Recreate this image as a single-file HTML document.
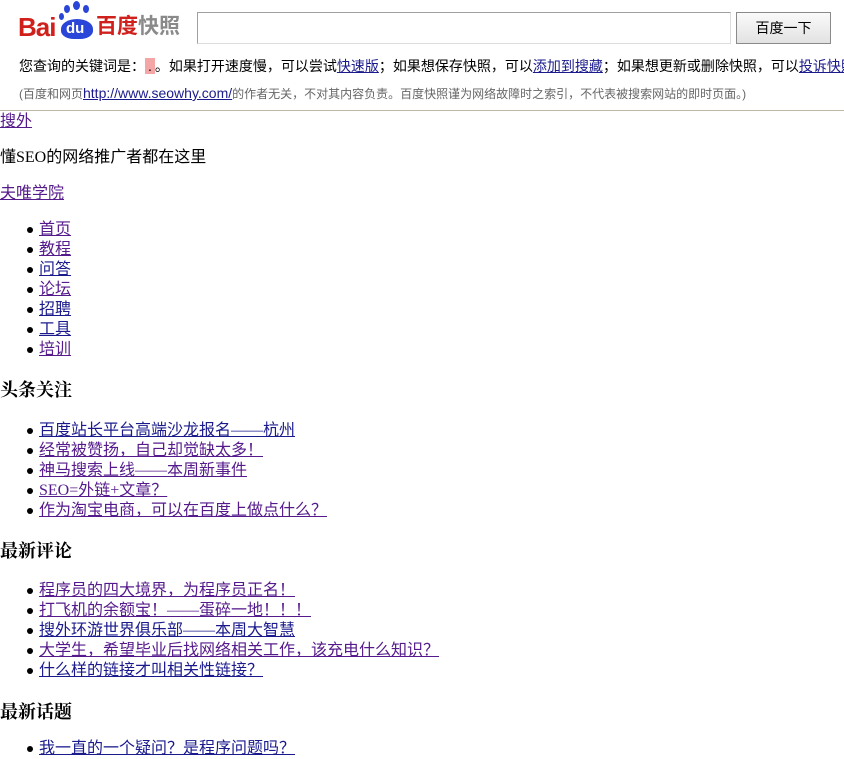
<!DOCTYPE html>
<html><head><meta charset="utf-8">
<style>
body{margin:0;width:844px;height:755px;overflow:hidden;background:#fff;position:relative;font-family:"Liberation Serif","Noto Sans CJK SC",serif;font-size:16px;color:#000}
.a{position:absolute;white-space:nowrap;line-height:20px}
a{color:#551a8b;text-decoration:underline}
a.b{color:#1a1a8c}
.hd{font-family:"Liberation Sans","Noto Sans CJK SC",sans-serif}
.bul{position:absolute;width:6px;height:6px;border-radius:50%;background:#000}
h3{position:absolute;margin:0;font-size:18px;font-weight:bold;line-height:22px;left:0;font-family:"Liberation Serif","Noto Serif CJK SC",serif}
</style></head><body>
<div class="a hd" style="left:18px;top:10px;font-size:26px;font-weight:bold;color:#d0201c;line-height:34px;letter-spacing:-1px">Bai</div>
<div style="position:absolute;left:64px;top:5px;width:6px;height:8px;border-radius:50%;background:#2a46d8"></div>
<div style="position:absolute;left:73px;top:1px;width:7px;height:9px;border-radius:50%;background:#2a46d8"></div>
<div style="position:absolute;left:83px;top:5px;width:6px;height:8px;border-radius:50%;background:#2a46d8"></div>
<div style="position:absolute;left:59px;top:13px;width:5px;height:7px;border-radius:50%;background:#2a46d8"></div>
<div style="position:absolute;left:61px;top:19px;width:32px;height:20px;border-radius:50% 50% 40% 40%;background:#2a46d8"></div>
<div class="a hd" style="left:66px;top:19px;font-size:15px;color:#fff;font-weight:bold;line-height:20px">du</div>
<div class="a hd" style="left:96px;top:13px;font-size:21px;font-weight:bold;color:#d0201c;line-height:28px">百度</div>
<div class="a hd" style="left:138px;top:13px;font-size:21px;font-weight:bold;color:#8a8a8a;line-height:28px">快照</div>
<div style="position:absolute;left:197px;top:12px;width:532px;height:30px;border:1px solid #a0a0a0;border-bottom-color:#ddd;border-right-color:#ddd;background:#fff"></div>
<div style="position:absolute;left:736px;top:12px;width:93px;height:30px;border:1px solid #8a8a8a;background:linear-gradient(#fafafa,#e2e2e2)"></div>
<div class="a hd" style="left:736px;top:18px;width:95px;text-align:center;font-size:14px">百度一下</div>
<div class="a hd" style="left:19px;top:56px;font-size:14px">您查询的关键词是：<span style="background:#f4a6a6;padding:0 3px">.</span>。如果打开速度慢，可以尝试<a class="b" href="#">快速版</a>；如果想保存快照，可以<a class="b" href="#">添加到搜藏</a>；如果想更新或删除快照，可以<a class="b" href="#">投诉快照</a></div>
<div class="a hd" style="left:19px;top:83px;font-size:12px;color:#666">(百度和网页<a class="b" href="#" style="font-size:14px">http://www.seowhy.com/</a>的作者无关，不对其内容负责。百度快照谨为网络故障时之索引，不代表被搜索网站的即时页面。)</div>
<div style="position:absolute;left:0;top:110px;width:844px;height:1px;background:#bdb8a8"></div>
<div class="a" style="left:0;top:112px"><a href="#">搜外</a></div>
<div class="a" style="left:0;top:148px">懂SEO的网络推广者都在这里</div>
<div class="a" style="left:0;top:184px"><a href="#">夫唯学院</a></div>

<div class="bul" style="left:27px;top:227px"></div><div class="a" style="left:39px;top:220px"><a href="#">首页</a></div>
<div class="bul" style="left:27px;top:247px"></div><div class="a" style="left:39px;top:240px"><a href="#">教程</a></div>
<div class="bul" style="left:27px;top:267px"></div><div class="a" style="left:39px;top:260px"><a class="b" href="#">问答</a></div>
<div class="bul" style="left:27px;top:287px"></div><div class="a" style="left:39px;top:280px"><a href="#">论坛</a></div>
<div class="bul" style="left:27px;top:307px"></div><div class="a" style="left:39px;top:300px"><a class="b" href="#">招聘</a></div>
<div class="bul" style="left:27px;top:327px"></div><div class="a" style="left:39px;top:320px"><a class="b" href="#">工具</a></div>
<div class="bul" style="left:27px;top:347px"></div><div class="a" style="left:39px;top:340px"><a href="#">培训</a></div>

<h3 style="top:379px">头条关注</h3>
<div class="bul" style="left:27px;top:428px"></div><div class="a" style="left:39px;top:421px"><a class="b" href="#">百度站长平台高端沙龙报名——杭州</a></div>
<div class="bul" style="left:27px;top:448px"></div><div class="a" style="left:39px;top:441px"><a href="#">经常被赞扬，自己却觉缺太多！ </a></div>
<div class="bul" style="left:27px;top:468px"></div><div class="a" style="left:39px;top:461px"><a href="#">神马搜索上线——本周新事件</a></div>
<div class="bul" style="left:27px;top:488px"></div><div class="a" style="left:39px;top:481px"><a href="#">SEO=外链+文章？ </a></div>
<div class="bul" style="left:27px;top:508px"></div><div class="a" style="left:39px;top:501px"><a href="#">作为淘宝电商，可以在百度上做点什么？ </a></div>

<h3 style="top:540px">最新评论</h3>
<div class="bul" style="left:27px;top:588px"></div><div class="a" style="left:39px;top:581px"><a href="#">程序员的四大境界，为程序员正名！ </a></div>
<div class="bul" style="left:27px;top:608px"></div><div class="a" style="left:39px;top:601px"><a href="#">打飞机的余额宝！——蛋碎一地！！！ </a></div>
<div class="bul" style="left:27px;top:628px"></div><div class="a" style="left:39px;top:621px"><a class="b" href="#">搜外环游世界俱乐部——本周大智慧</a></div>
<div class="bul" style="left:27px;top:648px"></div><div class="a" style="left:39px;top:641px"><a href="#">大学生，希望毕业后找网络相关工作，该充电什么知识？ </a></div>
<div class="bul" style="left:27px;top:668px"></div><div class="a" style="left:39px;top:661px"><a class="b" href="#">什么样的链接才叫相关性链接？ </a></div>

<h3 style="top:701px">最新话题</h3>
<div class="bul" style="left:27px;top:746px"></div><div class="a" style="left:39px;top:739px"><a class="b" href="#">我一直的一个疑问？是程序问题吗？</a></div>
</body></html>
